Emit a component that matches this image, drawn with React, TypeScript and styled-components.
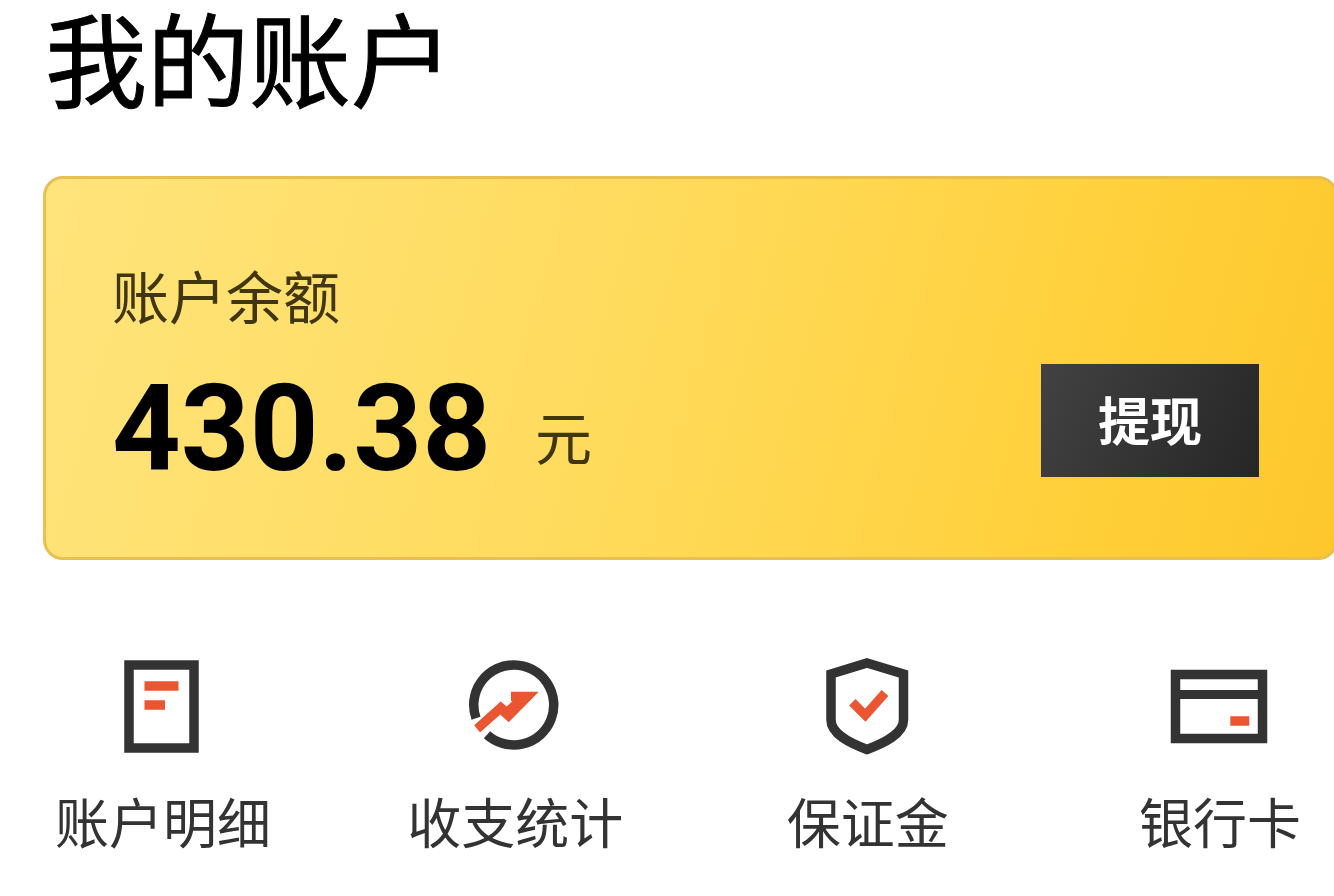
import React from "react";
import styled, { createGlobalStyle } from "styled-components";

const ink = "#333333";
const accent = "#ea5532";

const GlobalStyle = createGlobalStyle`
  * { box-sizing: border-box; }
  body {
    margin: 0;
    background: #ffffff;
    color: ${ink};
    font-family: "Noto Sans CJK SC", sans-serif;
    overflow-x: hidden;
  }
`;

const Page = styled.main`
  padding-bottom: 32px;
`;

const Title = styled.h1`
  margin: 0;
  padding: 0 45px;
  font-size: 102px;
  line-height: 112px;
  font-weight: 400;
  color: #000000;
  -webkit-text-stroke: 1px #000000;
`;

const Card = styled.section`
  display: flex;
  align-items: flex-end;
  justify-content: space-between;
  margin: 64px -4px 0 43px;
  padding: 79px 76px 80px 66px;
  border: 3px solid #e8c052;
  border-radius: 20px;
  background: linear-gradient(105deg, #ffe47c 0%, #ffdb5c 45%, #ffcf38 82%, #fdc72c 100%);
`;

const BalanceLabel = styled.h2`
  margin: 0;
  font-size: 57px;
  line-height: 72px;
  font-weight: 400;
  color: #40360f;
`;

const Balance = styled.p`
  display: flex;
  align-items: flex-end;
  gap: 44px;
  margin: 51px 0 0;
`;

const Amount = styled.strong`
  font-family: Roboto, sans-serif;
  font-size: 120px;
  line-height: 96px;
  font-weight: 700;
  color: #000000;
`;

const Unit = styled.span`
  font-size: 57px;
  line-height: 84px;
  color: #40360f;
`;

const WithdrawButton = styled.button`
  padding: 18px 57px 22px;
  border: 0;
  background: linear-gradient(115deg, #424242, #262626);
  color: #ffffff;
  font: 700 52px/73px "Noto Sans CJK SC", sans-serif;
  cursor: pointer;
`;

const Menu = styled.nav`
  display: flex;
  justify-content: space-between;
  margin-top: 96px;
  padding: 0 6px 0 55px;
`;

const MenuLink = styled.a`
  display: flex;
  flex-direction: column;
  align-items: center;
  gap: 33px;
  width: 216px;
  font-size: 54px;
  line-height: 64px;
  white-space: nowrap;
  color: ${ink};
  text-decoration: none;
`;

const Icon = styled.svg`
  width: 100px;
  height: 100px;
  fill: none;
`;

const StatementIcon = () => (
  <Icon viewBox="0 0 100 100" aria-hidden="true">
    <rect x="16" y="9" width="65" height="83" stroke={ink} strokeWidth="9.5" />
    <path d="M31.5 30H65.5M31.5 49H52" stroke={accent} strokeWidth="9.5" />
  </Icon>
);

const TrendIcon = () => (
  <Icon viewBox="0 0 100 100" aria-hidden="true">
    <path d="M11 62.2A40 40 0 1 1 22 78.7" stroke={ink} strokeWidth="9.5" />
    <path
      d="M9.2 69.2L35.7 45.5L41.8 50.4L47.5 45H46V35.8H73.8L43.7 66.3L35.3 58.6L15 76.6Z"
      fill={accent}
    />
  </Icon>
);

const ShieldIcon = () => (
  <Icon viewBox="0 0 100 100" aria-hidden="true">
    <path
      d="M49 7L85.5 18V64C85.5 78 66 87 49 93.5C32 87 13 78 13 64V18Z"
      stroke={ink}
      strokeWidth="9.5"
    />
    <path d="M34.3 46.3L47.3 59.3L67 37" stroke={accent} strokeWidth="9" />
  </Icon>
);

const CardIcon = () => (
  <Icon viewBox="0 0 100 100" aria-hidden="true">
    <rect x="5.5" y="18.5" width="87" height="64" stroke={ink} strokeWidth="9.5" />
    <path d="M6 38.5H92" stroke={ink} strokeWidth="9" />
    <path d="M60.3 65H79.3" stroke={accent} strokeWidth="9.5" />
  </Icon>
);

const entries = [
  { label: "账户明细", Glyph: StatementIcon },
  { label: "收支统计", Glyph: TrendIcon },
  { label: "保证金", Glyph: ShieldIcon },
  { label: "银行卡", Glyph: CardIcon },
];

export default function App() {
  return (
    <Page lang="zh-CN">
      <GlobalStyle />
      <Title>我的账户</Title>
      <Card>
        <div>
          <BalanceLabel>账户余额</BalanceLabel>
          <Balance>
            <Amount>430.38</Amount>
            <Unit>元</Unit>
          </Balance>
        </div>
        <WithdrawButton type="button">提现</WithdrawButton>
      </Card>
      <Menu>
        {entries.map(({ label, Glyph }) => (
          <MenuLink href="#" key={label}>
            <Glyph />
            <span>{label}</span>
          </MenuLink>
        ))}
      </Menu>
    </Page>
  );
}
